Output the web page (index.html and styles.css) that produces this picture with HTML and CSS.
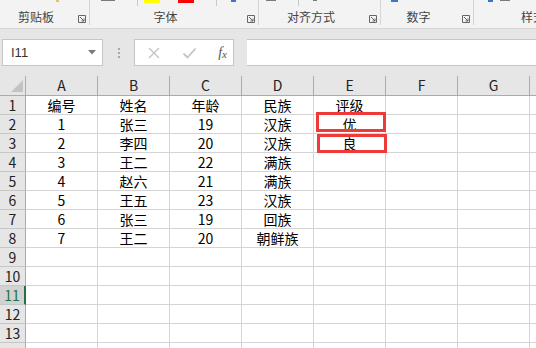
FILE: index.html
```html
<!DOCTYPE html>
<html lang="zh-CN">
<head>
    <meta charset="UTF-8">
    <title>工作表</title>
    <link rel="stylesheet" href="styles.css">
</head>
<body>

    <div class="ribbon">
        <div class="group g1">
            <div class="peek"><span class="dot-orange"></span></div>
            <div class="group-foot"><span class="label">剪贴板</span><span class="launcher"><svg width="8" height="8" viewBox="0 0 8 8"><path d="M0.5 7.5V0.5H7.5V7.5Z M2 2L6 6 M6 3.5V6H3.5" fill="none" stroke="#666" stroke-width="1"/></svg></span></div>
        </div>
        <div class="group g2">
            <div class="peek">
                <span class="bar-grey"></span>
                <span class="pk-sep"></span>
                <span class="swatch yellow"></span>
                <span class="swatch red"></span>
                <span class="pk-sep"></span>
                <span class="bar-blue"></span>
            </div>
            <div class="group-foot"><span class="label">字体</span><span class="launcher"><svg width="8" height="8" viewBox="0 0 8 8"><path d="M0.5 7.5V0.5H7.5V7.5Z M2 2L6 6 M6 3.5V6H3.5" fill="none" stroke="#666" stroke-width="1"/></svg></span></div>
        </div>
        <div class="group g3">
            <div class="peek">
                <span class="bar-grey short"></span>
                <span class="pk-sep"></span>
                <span class="bar-grey tiny"></span>
            </div>
            <div class="group-foot"><span class="label">对齐方式</span><span class="launcher"><svg width="8" height="8" viewBox="0 0 8 8"><path d="M0.5 7.5V0.5H7.5V7.5Z M2 2L6 6 M6 3.5V6H3.5" fill="none" stroke="#666" stroke-width="1"/></svg></span></div>
        </div>
        <div class="group g4">
            <div class="peek"><span class="bar-blue wide"></span></div>
            <div class="group-foot"><span class="label">数字</span><span class="launcher"><svg width="8" height="8" viewBox="0 0 8 8"><path d="M0.5 7.5V0.5H7.5V7.5Z M2 2L6 6 M6 3.5V6H3.5" fill="none" stroke="#666" stroke-width="1"/></svg></span></div>
        </div>
        <div class="group g5">
            <div class="peek"><span class="bar-blue"></span><span class="bar-grey short"></span></div>
            <div class="group-foot"><span class="label">样式</span></div>
        </div>
    </div>

    <div class="formula-row">
        <div class="name-box">
            <span class="cell-ref">I11</span>
            <svg class="caret" width="8" height="5" viewBox="0 0 8 5"><path d="M0 0H8L4 4.5Z" fill="#7a7a7a"/></svg>
        </div>
        <div class="grip"><span></span><span></span><span></span></div>
        <div class="fx-box">
            <svg width="14" height="14" viewBox="0 0 14 14"><path d="M2 2L12 12M12 2L2 12" stroke="#c4c4c4" stroke-width="1.4" fill="none"/></svg>
            <svg width="15" height="14" viewBox="0 0 15 14"><path d="M1.5 7.5L5.5 11.5L13.5 2.5" stroke="#c4c4c4" stroke-width="1.8" fill="none"/></svg>
            <span class="fx"><i>f</i><sub>x</sub></span>
        </div>
        <div class="formula-input"></div>
    </div>

    <div class="sheet-wrap">
        <table class="sheet">
            <tr class="col-head">
                <th class="corner"><svg width="12" height="12" viewBox="0 0 12 12"><path d="M12 0V12H0Z" fill="#c3c3c3"/></svg></th>
                <th>A</th><th>B</th><th>C</th><th>D</th><th>E</th><th>F</th><th>G</th><th></th>
            </tr>
            <tr><th class="row-head">1</th><td>编号</td><td>姓名</td><td>年龄</td><td>民族</td><td>评级</td><td></td><td></td><td></td></tr>
            <tr><th class="row-head">2</th><td>1</td><td>张三</td><td>19</td><td>汉族</td><td class="marked">优<span class="red-box first"></span></td><td></td><td></td><td></td></tr>
            <tr><th class="row-head">3</th><td>2</td><td>李四</td><td>20</td><td>汉族</td><td class="marked">良<span class="red-box second"></span></td><td></td><td></td><td></td></tr>
            <tr><th class="row-head">4</th><td>3</td><td>王二</td><td>22</td><td>满族</td><td></td><td></td><td></td><td></td></tr>
            <tr><th class="row-head">5</th><td>4</td><td>赵六</td><td>21</td><td>满族</td><td></td><td></td><td></td><td></td></tr>
            <tr><th class="row-head">6</th><td>5</td><td>王五</td><td>23</td><td>汉族</td><td></td><td></td><td></td><td></td></tr>
            <tr><th class="row-head">7</th><td>6</td><td>张三</td><td>19</td><td>回族</td><td></td><td></td><td></td><td></td></tr>
            <tr><th class="row-head">8</th><td>7</td><td>王二</td><td>20</td><td>朝鲜族</td><td></td><td></td><td></td><td></td></tr>
            <tr><th class="row-head">9</th><td></td><td></td><td></td><td></td><td></td><td></td><td></td><td></td></tr>
            <tr><th class="row-head">10</th><td></td><td></td><td></td><td></td><td></td><td></td><td></td><td></td></tr>
            <tr><th class="row-head active">11</th><td></td><td></td><td></td><td></td><td></td><td></td><td></td><td></td></tr>
            <tr><th class="row-head">12</th><td></td><td></td><td></td><td></td><td></td><td></td><td></td><td></td></tr>
            <tr><th class="row-head">13</th><td></td><td></td><td></td><td></td><td></td><td></td><td></td><td></td></tr>
            <tr><th class="row-head"></th><td></td><td></td><td></td><td></td><td></td><td></td><td></td><td></td></tr>
        </table>
    </div>

</body>
</html>
```

FILE: styles.css
```css
body {
    margin: 0;
    width: 536px;
    height: 348px;
    overflow: hidden;
    background: #e6e6e6;
    font-family: "Noto Sans CJK SC", "Noto Sans", sans-serif;
    color: #000000;
}

/* ribbon */
.ribbon {
    display: flex;
    height: 28px;
    background: #f3f3f3;
    border-bottom: 1px solid #d5d5d5;
}
.group {
    flex: none;
    display: flex;
    flex-direction: column;
    justify-content: space-between;
    height: 25px;
    border-right: 1px solid #d5d5d5;
}
.g1 { width: 89px; }
.g2 { width: 168px; }
.g3 { width: 121px; }
.g4 { width: 92px; }
.g5 { width: 118px; border-right: none; }
.peek {
    display: flex;
    align-items: flex-start;
    height: 6px;
}
.group-foot {
    display: flex;
    align-items: center;
    height: 16px;
}
.label {
    flex: 1;
    text-align: center;
    font-size: 12px;
    line-height: 16px;
    color: #444444;
    white-space: nowrap;
}
.launcher {
    width: 17px;
    display: flex;
    justify-content: flex-end;
    padding-right: 3px;
    box-sizing: border-box;
    margin-top: 3px;
}
.dot-orange {
    width: 3px;
    height: 2px;
    margin-left: 56px;
    background: #f0b050;
    border-radius: 1px;
}
.bar-grey {
    width: 14px;
    height: 1px;
    margin-left: 11px;
    background: #7a7a7a;
}
.bar-grey.short { width: 10px; margin-left: 7px; }
.bar-grey.tiny { width: 4px; margin-left: 14px; }
.pk-sep {
    width: 1px;
    height: 6px;
    margin-left: 22px;
    background: #c8c8c8;
}
.swatch {
    width: 16px;
    height: 3px;
    margin-left: 6px;
}
.swatch.yellow { background: #ffff00; }
.swatch.red { background: #ff0000; margin-left: 18px; }
.bar-blue {
    width: 5px;
    height: 2px;
    margin-left: 14px;
    background: #3b78c4;
}
.bar-blue.wide { width: 7px; margin-left: 10px; }

/* formula bar */
.formula-row {
    display: flex;
    align-items: stretch;
    height: 27px;
    padding: 10px 0;
}
.name-box {
    width: 101px;
    margin-left: 2px;
    background: #ffffff;
    border: 1px solid #c6c6c6;
    display: flex;
    align-items: center;
    justify-content: space-between;
    padding: 0 6px 0 8px;
    box-sizing: border-box;
}
.cell-ref {
    font-family: "Liberation Sans", Arial, sans-serif;
    font-size: 13px;
    color: #333333;
}
.grip {
    width: 31px;
    display: flex;
    flex-direction: column;
    align-items: center;
    justify-content: center;
    gap: 2px;
}
.grip span {
    width: 2px;
    height: 2px;
    background: #a8a8a8;
}
.fx-box {
    width: 100px;
    background: #ffffff;
    border: 1px solid #c6c6c6;
    box-sizing: border-box;
    display: flex;
    align-items: center;
    justify-content: space-between;
    padding: 0 6px 0 12px;
}
.fx {
    font-family: "Liberation Serif", serif;
    font-size: 14px;
    color: #555555;
}
.fx sub {
    font-size: 11px;
    font-style: italic;
    vertical-align: -1px;
}
.formula-input {
    flex: 1;
    margin-left: 13px;
    background: #ffffff;
    border-top: 1px solid #c6c6c6;
    border-bottom: 1px solid #c6c6c6;
}

/* grid */
.sheet-wrap {
    background: #ffffff;
    height: 272px;
    overflow: hidden;
}
.sheet {
    table-layout: fixed;
    border-collapse: separate;
    border-spacing: 0;
    width: 602px;
}
.sheet th,
.sheet td {
    padding: 0;
    width: 71px;
    height: 18px;
    line-height: 18px;
    font-size: 14px;
    font-weight: normal;
    text-align: center;
    border-right: 1px solid #d4d4d4;
    border-bottom: 1px solid #d4d4d4;
    white-space: nowrap;
    overflow: hidden;
}
.col-head th {
    height: 19px;
    line-height: 19px;
    background: #e6e6e6;
    color: #222222;
    border-right-color: #ababab;
    border-bottom-color: #ababab;
}
.sheet .corner {
    width: 25px;
    vertical-align: bottom;
    text-align: right;
    line-height: 0;
    border-right-color: #ababab;
}
.corner svg {
    margin: 0 2px 3px 0;
}
.sheet .row-head {
    width: 25px;
    background: #e6e6e6;
    color: #222222;
    border-right-color: #ababab;
    border-bottom-color: #c6c6c6;
}
.sheet .row-head.active {
    width: 24px;
    background: #d2d2d2;
    color: #217346;
    border-right: 2px solid #217346;
}
.sheet td.marked {
    position: relative;
    overflow: visible;
}
.red-box {
    position: absolute;
    border: 3px solid #f03a3a;
    box-sizing: border-box;
}
.red-box.first {
    left: 2px;
    top: -3px;
    width: 70px;
    height: 20px;
}
.red-box.second {
    left: 3px;
    top: 0;
    width: 70px;
    height: 19px;
}
```
